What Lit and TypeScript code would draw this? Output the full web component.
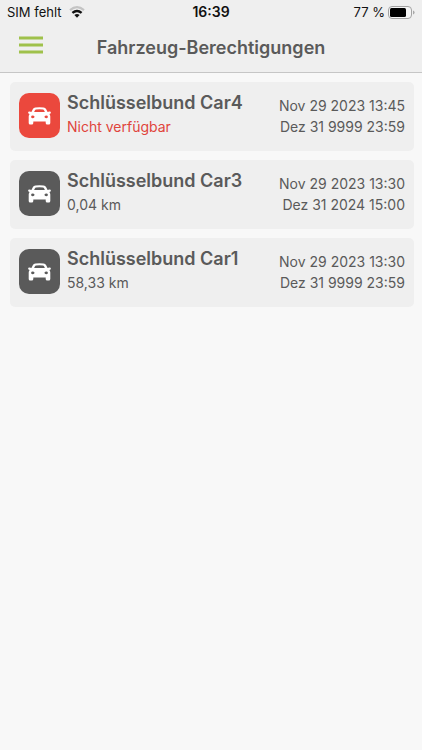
import { LitElement, html, css, svg } from "lit";
import { customElement, property } from "lit/decorators.js";
import { classMap } from "lit/directives/class-map.js";

interface Permission {
  name: string;
  detail: string;
  from: string;
  until: string;
  unavailable?: boolean;
}

const permissions: Permission[] = [
  {
    name: "Schlüsselbund Car4",
    detail: "Nicht verfügbar",
    from: "Nov 29 2023 13:45",
    until: "Dez 31 9999 23:59",
    unavailable: true,
  },
  {
    name: "Schlüsselbund Car3",
    detail: "0,04 km",
    from: "Nov 29 2023 13:30",
    until: "Dez 31 2024 15:00",
  },
  {
    name: "Schlüsselbund Car1",
    detail: "58,33 km",
    from: "Nov 29 2023 13:30",
    until: "Dez 31 9999 23:59",
  },
];

const carShape = svg`
  <path fill="#fff" fill-rule="evenodd" d="M7.4 0.5Q11.5 0 15.6 0.5Q17.4 0.8 18.2 2.2L19.6 5L21.4 4.6Q22.9 4.5 22.9 5.7Q22.9 6.6 21.4 7Q22.3 8.1 22.3 9.6V16Q22.3 17.6 20.8 17.6H19.2Q17.7 17.6 17.7 16V14.6H5.3V16Q5.3 17.6 3.8 17.6H2.2Q0.7 17.6 0.7 16V9.6Q0.7 8.1 1.6 7Q0.1 6.6 0.1 5.7Q0.1 4.5 1.6 4.6L3.4 5L4.8 2.2Q5.6 0.8 7.4 0.5ZM8 2.5Q7.3 2.6 7 3.2L6.1 5H16.9L16 3.2Q15.7 2.6 15 2.5Q11.5 2.1 8 2.5ZM3.1 9.7A1.7 1.3 0 0 0 6.5 10A1.7 1.3 0 0 0 3.1 9.7ZM16.5 10A1.7 1.3 0 0 0 19.9 9.7A1.7 1.3 0 0 0 16.5 10Z"/>
`;

@customElement("status-bar")
export class StatusBar extends LitElement {
  static styles = css`
    :host {
      display: grid;
      grid-template-columns: 1fr auto 1fr;
      align-items: center;
      height: 24px;
      padding: 0 7px;
      color: #111;
      font-size: 13px;
      line-height: 24px;
    }
    .side {
      display: flex;
      align-items: center;
      gap: 7px;
    }
    .end {
      justify-content: flex-end;
      gap: 3px;
    }
    .time {
      font-size: 14px;
      font-weight: 600;
    }
    svg {
      display: block;
    }
  `;

  render() {
    return html`
      <div class="side">
        <span>SIM fehlt</span>
        <svg width="16" height="12" viewBox="0 0 16 12" fill="none" aria-hidden="true">
          <path d="M1 4.2Q8 -1.8 15 4.2" stroke="#c4c4c4" stroke-width="2.2" />
          <path d="M3.4 6.9Q8 2.9 12.6 6.9" stroke="#111" stroke-width="2.4" />
          <path d="M8 11.7L5.4 9.1Q8 7 10.6 9.1Z" fill="#111" />
        </svg>
      </div>
      <span class="time">16:39</span>
      <div class="side end">
        <span>77 %</span>
        <svg width="27" height="13" viewBox="0 0 27 13" aria-hidden="true">
          <rect x="0.5" y="0.5" width="23" height="12" rx="3.5" fill="#f4f4f4" stroke="#a3a3a3" />
          <rect x="2" y="2" width="16" height="9" rx="1.5" fill="#000" />
          <path d="M25 4.5Q26.6 4.9 26.6 6.5T25 8.5Z" fill="#a8a8a8" />
        </svg>
      </div>
    `;
  }
}

@customElement("permission-card")
export class PermissionCard extends LitElement {
  @property({ attribute: false }) item!: Permission;

  static styles = css`
    :host {
      display: block;
    }
    .card {
      display: flex;
      align-items: flex-start;
      height: 69px;
      box-sizing: border-box;
      padding: 0 9px;
      border-radius: 5px;
      background: #efefef;
      color: #5a5a5a;
    }
    .icon {
      display: grid;
      place-items: center;
      flex: none;
      width: 41px;
      height: 45px;
      margin: 11px 7px 0 0;
      border-radius: 10px;
      background: #5a5a5a;
    }
    .unavailable .icon {
      background: #eb483d;
    }
    .info {
      flex: 1;
      min-width: 0;
      padding-top: 8px;
    }
    .name {
      margin: 0;
      font-size: 18px;
      font-weight: 600;
      line-height: 26px;
      white-space: nowrap;
    }
    .detail {
      margin: 0;
      font-size: 14px;
      line-height: 22px;
    }
    .unavailable .detail {
      color: #e0443c;
    }
    .dates {
      padding-top: 13px;
      font-size: 14px;
      line-height: 21px;
      text-align: right;
      white-space: nowrap;
    }
    time {
      display: block;
    }
  `;

  render() {
    const { name, detail, from, until, unavailable } = this.item;
    return html`
      <article class=${classMap({ card: true, unavailable: !!unavailable })}>
        <div class="icon">
          <svg width="23" height="18" viewBox="0 0 23 18" aria-hidden="true">${carShape}</svg>
        </div>
        <div class="info">
          <h2 class="name">${name}</h2>
          <p class="detail">${detail}</p>
        </div>
        <div class="dates">
          <time>${from}</time>
          <time>${until}</time>
        </div>
      </article>
    `;
  }
}

@customElement("app-root")
export class AppRoot extends LitElement {
  static styles = css`
    :host {
      display: block;
      min-height: 100vh;
      background: #f8f8f8;
      font-family: Inter, "Liberation Sans", sans-serif;
    }
    .top {
      background: #efefef;
      border-bottom: 1px solid #c6c6c6;
    }
    .bar {
      display: grid;
      grid-template-columns: 44px 1fr 44px;
      align-items: center;
      height: 48px;
      padding: 0 9px;
    }
    .menu {
      display: grid;
      place-items: center;
      height: 44px;
      padding: 0 0 6px;
      border: 0;
      background: none;
    }
    h1 {
      margin: 0;
      color: #5a5a5a;
      font-size: 18px;
      font-weight: 600;
      line-height: 24px;
      text-align: center;
      white-space: nowrap;
    }
    .list {
      display: grid;
      gap: 9px;
      margin: 0;
      padding: 9px 8px 9px 10px;
      list-style: none;
    }
  `;

  render() {
    return html`
      <header class="top">
        <status-bar></status-bar>
        <div class="bar">
          <button class="menu" type="button" aria-label="Menü">
            <svg width="24" height="18" viewBox="0 0 24 18" aria-hidden="true">
              <path d="M0 2H24M0 9H24M0 16H24" stroke="#9fc14b" stroke-width="3" />
            </svg>
          </button>
          <h1>Fahrzeug-Berechtigungen</h1>
        </div>
      </header>
      <main>
        <ul class="list">
          ${permissions.map(
            (item) => html`<li><permission-card .item=${item}></permission-card></li>`,
          )}
        </ul>
      </main>
    `;
  }
}
